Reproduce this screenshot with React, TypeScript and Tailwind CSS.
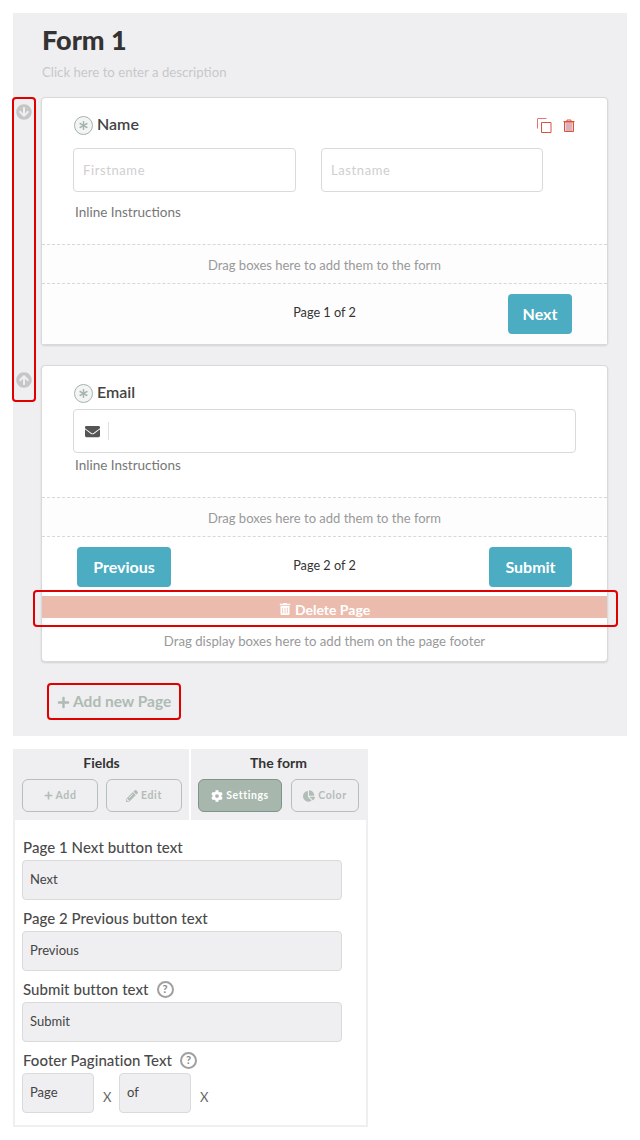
import React from "react";
import { FaArrowCircleDown, FaArrowCircleUp, FaEnvelope, FaPlus, FaPencilAlt, FaCog, FaChartPie, FaAsterisk, FaTrashAlt } from "react-icons/fa";

const font = "font-['Lato','Noto_Sans',sans-serif]";

function Req() {
  return (
    <span className="mt-[2px] flex h-[19px] w-[19px] shrink-0 items-center justify-center rounded-full border border-[#9fb5aa] bg-[#f4f4f4] text-[#a3b5ac]">
      <FaAsterisk size={9} />
    </span>
  );
}

function Copy() {
  return (
    <svg width="15" height="15" viewBox="0 0 15 15" fill="none" strokeWidth="1">
      <path d="M9.500 0.500H1a.5.5 0 0 0-.5.5V10.500" stroke="#e57373" />
      <path d="M4.500 4.500h9.500v10h-9.500z" stroke="#d9533a" fill="#fff" />
    </svg>
  );
}

function Trash() {
  return (
    <svg width="12" height="13" viewBox="0 0 12 13" fill="none">
      <path d="M0.500 2.500h11M4 2.500V1h4v1.500" stroke="#d9533a" />
      <path d="M1.500 3h9v9.500h-9z" stroke="#d9533a" fill="#f3d5d0" />
      <path d="M4 4v8M6 4v8M8 4v8" stroke="#c88aa8" />
    </svg>
  );
}

function Drop({ children }: { children: React.ReactNode }) {
  return (
    <div className="flex h-[39px] items-center justify-center border-t border-dashed border-[#d8d8d8] bg-[#fdfdfd] pt-[4px] text-[13px] text-[#999]">
      {children}
    </div>
  );
}

function Btn({ children, className }: { children: React.ReactNode; className: string }) {
  return (
    <div className={`flex h-10 items-center justify-center rounded bg-[#4bacc2] text-[16px] font-bold text-white ${className}`}>
      {children}
    </div>
  );
}

function Text({ children, className }: { children: string; className: string }) {
  return (
    <div className={`flex h-11 items-center rounded border border-[#dadada] bg-white pl-[9px] pt-[2px] text-[13px] tracking-[0.6px] text-[#cfcfcf] ${className}`}>
      {children}
    </div>
  );
}

function Tool({ icon, label, active, className }: { icon: React.ReactNode; label: string; active?: boolean; className: string }) {
  return (
    <div
      className={`flex h-[33px] items-center justify-center gap-[3px] rounded-md border text-[10.500px] font-bold tracking-[0.6px] ${
        active ? "border-[#7f9489] bg-[#a7b7ad] text-white" : "border-[#b4c0ba] bg-[#efeff1] text-[#b2bdb7]"
      } ${className}`}
    >
      {icon}
      {label}
    </div>
  );
}

function Label({ children, help }: { children: string; help?: boolean }) {
  return (
    <div className="flex h-[18px] items-center gap-[8px] pl-[1px] text-[15px] font-medium tracking-[0.05px] text-[#4a4a4a]">
      {children}
      {help && (
        <span className="flex h-[17px] w-[17px] items-center justify-center rounded-full border-2 border-[#a0a0a0] text-[11px] font-bold text-[#888]">?</span>
      )}
    </div>
  );
}

function Setting({ label, value, help }: { label: string; value: string; help?: boolean }) {
  return (
    <div className="mb-[9px]">
      <Label help={help}>{label}</Label>
      <div className="mt-[4px] flex h-10 w-[320px] items-center rounded border border-[#dadada] bg-[#efeff1] pl-[7px] text-[13px] text-[#444]">
        {value}
      </div>
    </div>
  );
}

export default function App() {
  return (
    <div className={`h-[1140px] w-[640px] overflow-hidden bg-white pt-[13px] ${font}`}>
      <div className="relative ml-[13px] h-[723px] w-[614px] bg-[#efeff1] pl-[28px] pr-[19px]">
        <h1 className="h-[33px] pl-[1px] pt-[9px] text-[27px] leading-[35px] font-black text-[#333]">Form 1</h1>
        <p className="mt-[17px] h-[34px] pl-[1px] text-[13.200px] leading-[18px] text-[#c8c8c8]">Click here to enter a description</p>

        <section className="h-[248px] rounded border border-[#d9d9d9] bg-white shadow-[0_1px_2px_rgba(0,0,0,0.12)]">
          <div className="h-[146px] pl-[31px] pr-[31px]">
            <div className="flex h-[50px] items-center gap-[4px] pl-[1px] pt-[2px] text-[16px] font-semibold text-[#444]">
              <Req />
              Name
              <span className="ml-auto mt-[2px] flex items-center gap-[11px] pr-[1px]">
                <Copy />
                <Trash />
              </span>
            </div>
            <div className="flex gap-[25px]">
              <Text className="w-[223px]">Firstname</Text>
              <Text className="w-[222px]">Lastname</Text>
            </div>
            <p className="mt-[11px] pl-[2px] text-[13.500px] leading-[18px] text-[#777]">Inline Instructions</p>
          </div>
          <Drop>Drag boxes here to add them to the form</Drop>
          <div className="relative flex h-[61px] items-start justify-end border-t border-dashed border-[#d8d8d8] bg-[#fdfdfd] pr-[35px] pt-[10px]">
            <span className="absolute left-0 right-0 top-[19px] text-center text-[12.700px] text-[#333]">Page 1 of 2</span>
            <Btn className="w-16">Next</Btn>
          </div>
        </section>

        <section className="mt-5 h-[297px] rounded border border-[#d9d9d9] bg-white shadow-[0_1px_2px_rgba(0,0,0,0.12)]">
          <div className="h-[131px] pl-[31px] pr-[31px]">
            <div className="flex h-[43px] items-center gap-[4px] pl-[1px] pt-[9px] text-[16px] font-semibold text-[#444]">
              <Req />
              Email
            </div>
            <div className="flex h-11 items-center rounded border border-[#dadada] bg-white pl-[11px]">
              <FaEnvelope size={15} className="text-[#555]" />
              <span className="ml-[8px] h-[18px] w-px bg-[#e0e0e0]" />
            </div>
            <p className="mt-[3px] pl-[2px] text-[13.500px] leading-[18px] text-[#777]">Inline Instructions</p>
          </div>
          <Drop>Drag boxes here to add them to the form</Drop>
          <div className="relative flex h-[60px] items-start justify-between border-t border-dashed border-[#d8d8d8] bg-white pl-[35px] pr-[35px] pt-[10px]">
            <Btn className="w-[94px]">Previous</Btn>
            <span className="absolute left-0 right-0 top-[19px] text-center text-[12.700px] text-[#333]">Page 2 of 2</span>
            <Btn className="w-[83px]">Submit</Btn>
          </div>
          <div className="flex h-[22px] items-center justify-center gap-1 bg-[#ebbcae] pt-[4px] text-[14px] font-bold text-white">
            <FaTrashAlt size={12} />
            Delete Page
          </div>
          <div className="flex h-[42px] items-center justify-center pt-[6px] text-[13.200px] text-[#999]">
            Drag display boxes here to add them on the page footer
          </div>
        </section>

        <div className="mt-[31px] flex h-[18px] items-center gap-[3px] pl-[16px] text-[15.500px] font-bold text-[#aebbb3]">
          <FaPlus size={13} />
          Add new Page
        </div>

        <div className="absolute left-[-1px] top-[84px] flex h-[305px] w-6 flex-col items-center justify-between rounded-sm border-2 border-[#e00000] pb-[12px] pt-[5px] text-[#c6c6c6]">
          <FaArrowCircleDown size={16} />
          <FaArrowCircleUp size={16} />
        </div>
        <div className="absolute left-5 top-[577px] h-[37px] w-[585px] rounded-sm border-2 border-[#e00000]" />
        <div className="absolute left-[34px] top-[670px] h-[37px] w-[134px] rounded-sm border-2 border-[#e00000]" />
      </div>

      <div className="ml-[13px] mt-[13px] h-[378px] w-[355px] border-2 border-t-0 border-[#efeff1]">
        <div className="flex h-[71px] bg-[#efeff1] text-[#333]">
          <div className="w-[176px] border-r-2 border-white pl-[7px]">
            <div className="h-[30px] pr-[8px] pt-[5px] text-center text-[14px] font-bold leading-[18px]">Fields</div>
            <div className="flex gap-2">
              <Tool className="w-[76px]" icon={<FaPlus size={9} />} label="Add" />
              <Tool className="w-[76px]" icon={<FaPencilAlt size={12} />} label="Edit" />
            </div>
          </div>
          <div className="pl-[7px]">
            <div className="h-[30px] pt-[5px] text-center text-[14px] font-bold leading-[18px]">The form</div>
            <div className="flex gap-[9px]">
              <Tool className="w-[84px]" active icon={<FaCog size={12} />} label="Settings" />
              <Tool className="w-[68px]" icon={<FaChartPie size={12} />} label="Color" />
            </div>
          </div>
        </div>
        <div className="pl-[7px] pt-[18px]">
          <Setting label="Page 1 Next button text" value="Next" />
          <Setting label="Page 2 Previous button text" value="Previous" />
          <Setting label="Submit button text" value="Submit" help />
          <Label help>Footer Pagination Text</Label>
          <div className="mt-[4px] flex text-[13px] text-[#444]">
            <div className="flex h-10 w-[72px] items-center rounded border border-[#dadada] bg-[#efeff1] pl-[7px]">Page</div>
            <span className="ml-[9px] w-4 pt-[15px] text-[13px] text-[#666]">X</span>
            <div className="flex h-10 w-[72px] items-center rounded border border-[#dadada] bg-[#efeff1] pl-[7px]">of</div>
            <span className="ml-[9px] pt-[15px] text-[13px] text-[#666]">X</span>
          </div>
        </div>
      </div>
    </div>
  );
}
